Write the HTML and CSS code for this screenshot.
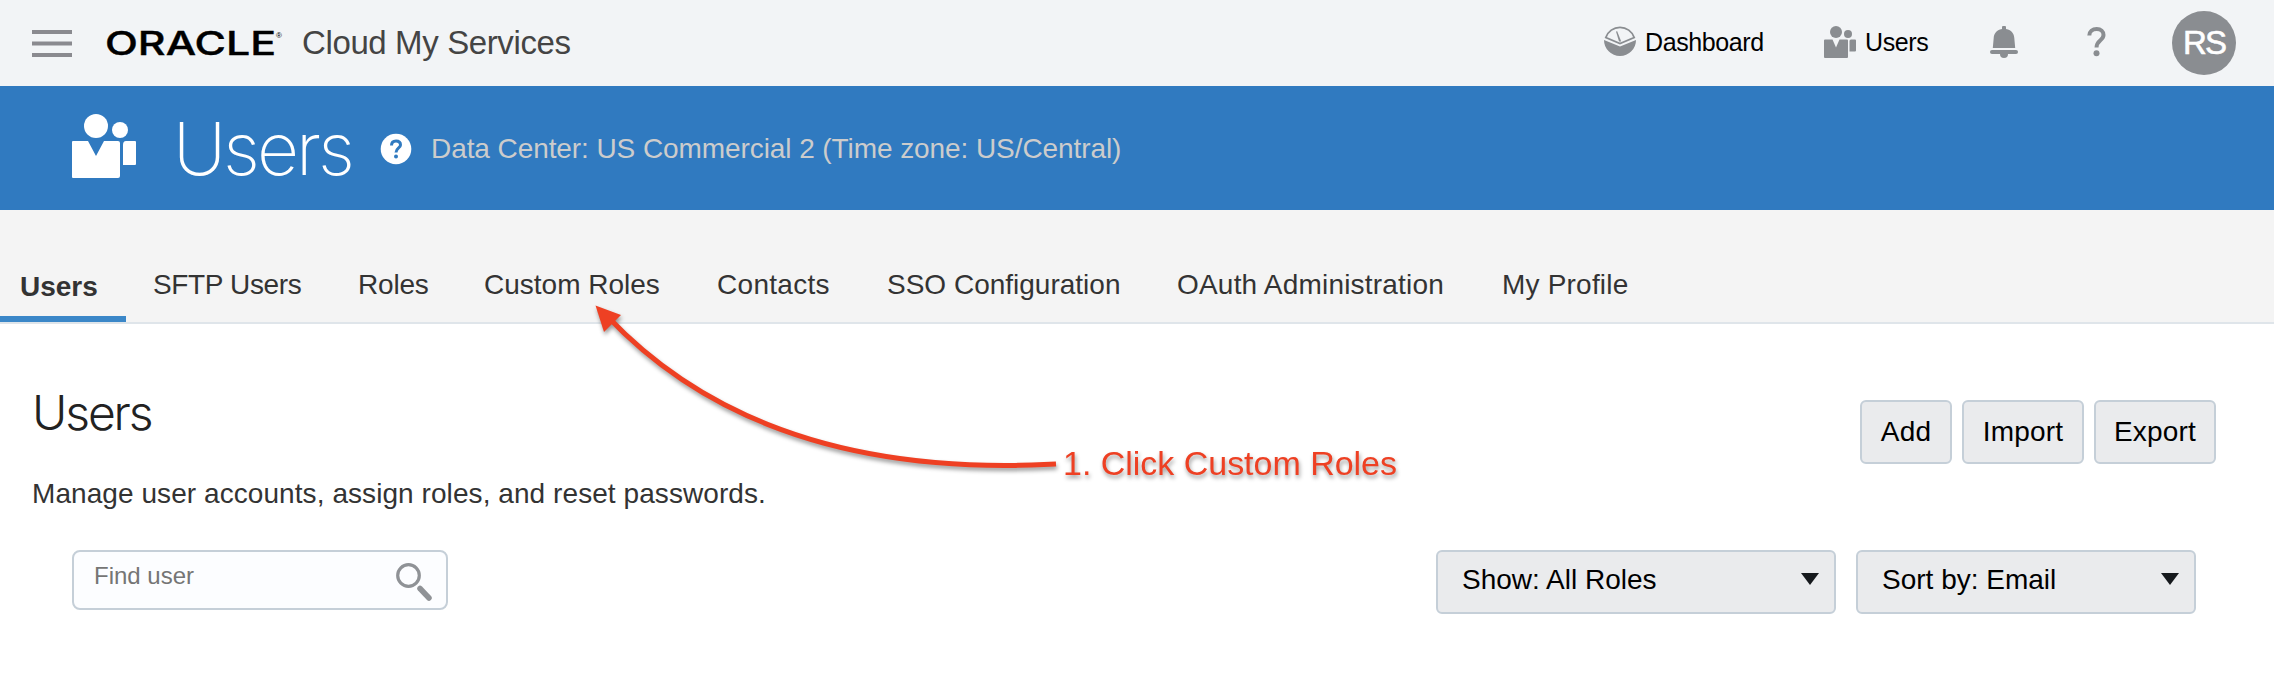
FILE: index.html
```html
<!DOCTYPE html>
<html lang="en">
<head>
<meta charset="utf-8">
<title>Users</title>
<link rel="stylesheet" href="styles.css">
</head>
<body>
<header class="topbar">
  <svg class="menu-icon" width="40" height="28" viewBox="0 0 40 28"><path d="M0 2h40M0 13.500h40M0 25h40" stroke="#8a8a8f" stroke-width="4"/></svg>
  <svg class="logo" width="180" height="40" viewBox="0 0 180 40"><text x="-1" y="32" textLength="171" lengthAdjust="spacingAndGlyphs" class="logo-text">ORACLE</text><text x="170" y="15" class="logo-mark">®</text></svg>
  <span class="product">Cloud My Services</span>
  <nav class="top-links">
    <a class="top-link dash"><svg width="32" height="32" viewBox="0 0 32 32" fill="#8a8d91"><path d="M1.800 11.500A15 15 0 0 1 30.200 11.500L16 17.500Z" fill="none" stroke="#8a8d91" stroke-width="1.800"/><path d="M12 5.500l1.200-.3L17.200 15.500h-2.200z"/><path d="M0 14L16 20.500 32 14A16 16 0 1 1 0 14z"/></svg><span>Dashboard</span></a>
    <a class="top-link people"><svg width="32" height="32" viewBox="0 0 32 32" fill="#8a8d91"><circle cx="12" cy="6" r="6"/><circle cx="24" cy="8" r="4"/><path d="M1 13.500H8.500L12 21.500 15.500 13.500H23Q24 13.500 24 14.500V31Q24 32 23 32H1Q0 32 0 31V14.500Q0 13.500 1 13.500zM27 13.500H31Q32 13.500 32 14.500V24.500Q32 25.500 31 25.500H25.500V15Q25.500 13.500 27 13.500z"/></svg><span>Users</span></a>
    <svg class="bell" width="28" height="32" viewBox="0 0 28 32" fill="#8a8d91"><path d="M12 3V1.500a2 2 0 0 1 4 0V3C22 4 24 8 24.300 12L25.200 22H2.800L3.700 12C4 8 6 4 12 3z"/><rect y="24" width="28" height="4" rx="2"/><path d="M10 28h8a4 4 0 0 1-8 0z"/></svg>
    <svg class="help" width="20" height="32" viewBox="0 0 20 32"><path d="M2.300 8.500C2.300 4.500 5.500 2 9.700 2S16.500 4.500 16.500 8C16.500 13.500 9.500 13 9.500 20.500" fill="none" stroke="#8a8d91" stroke-width="4"/><circle cx="9.500" cy="26.300" r="3" fill="#8a8d91"/></svg>
    <span class="avatar">RS</span>
  </nav>
</header>
<section class="banner">
  <svg class="banner-icon" width="64" height="64" viewBox="0 0 32 32" fill="#fff"><circle cx="12" cy="6" r="6"/><circle cx="24" cy="8" r="4"/><path d="M.5 13.500H8L12 21 16 13.500H23Q24 13.500 24 14.500V31Q24 32 23 32H.5Q0 32 0 31.500V14Q0 13.500 .5 13.500zM27 13.500H31.500Q32 13.500 32 14V25Q32 25.500 31.500 25.500H25.500V15.500Q25.500 13.500 27 13.500z"/></svg>
  <h1 class="banner-title">Users</h1>
  <svg class="banner-help" width="32" height="32" viewBox="0 0 32 32"><circle cx="16" cy="16" r="15.300" fill="#fff"/><path d="M11.500 12.500C11.500 9.500 13.300 8 16 8S20.500 9.600 20.500 12C20.500 15 16 15 16 19.500" fill="none" stroke="#307ac0" stroke-width="3"/><circle cx="16" cy="23.500" r="2" fill="#307ac0"/></svg>
  <span class="datacenter">Data Center: US Commercial 2 (Time zone: US/Central)</span>
</section>
<nav class="tabs">
  <a class="tab active">Users</a>
  <a class="tab sftp">SFTP Users</a>
  <a class="tab roles">Roles</a>
  <a class="tab custom">Custom Roles</a>
  <a class="tab contacts">Contacts</a>
  <a class="tab sso">SSO Configuration</a>
  <a class="tab oauth">OAuth Administration</a>
  <a class="tab profile">My Profile</a>
</nav>
<main class="content">
  <div class="heading-row">
    <div class="intro">
      <h2 class="title">Users</h2>
      <p class="desc">Manage user accounts, assign roles, and reset passwords.</p>
    </div>
    <div class="buttons"><button class="btn b-add">Add</button><button class="btn">Import</button><button class="btn">Export</button></div>
  </div>
  <div class="filters">
    <div class="search"><span>Find user</span><svg width="38" height="40" viewBox="0 0 38 40" fill="none" stroke="#8f9296"><circle cx="12.500" cy="13.500" r="10.800" stroke-width="3.200"/><path d="M24 26.500L33 36" stroke-width="5.500" stroke-linecap="round"/></svg></div>
    <div class="selects">
      <div class="select s-show"><span>Show: All Roles</span><i class="caret"></i></div>
      <div class="select s-sort"><span>Sort by: Email</span><i class="caret"></i></div>
    </div>
  </div>
</main>
<svg class="callout" width="840" height="200" viewBox="580 290 840 200">
  <path d="M607 316Q762 480 1056 464" fill="none" stroke="#ee4023" stroke-width="5"/>
  <path d="M595.500 305.500L621 315 604 332z" fill="#ee4023"/>
  <text x="1063" y="475" textLength="334" class="callout-text">1. Click Custom Roles</text>
</svg>
</body>
</html>
```
FILE: styles.css
```css
* { box-sizing: border-box; }
body { margin: 0; width: 2274px; height: 688px; overflow: hidden; background: #fff; color: #333; font-family: "Liberation Sans", Arial, sans-serif; position: relative; }
h1, h2, p { margin: 0; font-weight: 400; }
.topbar { height: 86px; background: #f2f4f6; display: flex; align-items: center; padding: 0 38px 0 32px; }
.menu-icon { flex: none; margin-top: 2px; }
.logo { margin-left: 34px; margin-top: -1px; flex: none; overflow: visible; }
.logo-text { font: 500 32px Inter, sans-serif; fill: #000; stroke: #000; stroke-width: 0.4px; }
.logo-mark { font: 8px "Liberation Sans", sans-serif; fill: #000; }
.product { margin-left: 16px; font-size: 33px; color: #444; letter-spacing: -0.380px; white-space: nowrap; }
.top-links { margin-left: auto; display: flex; align-items: center; color: #000; font-size: 25px; letter-spacing: -0.400px; }
.top-link { display: flex; align-items: center; gap: 9px; }
.top-link span { margin-top: -2px; }
.top-link svg { margin-top: -2px; }
.dash { width: 220px; }
.people { width: 166px; }
.bell { margin-top: -2px; }
.help { margin-left: 69px; margin-top: -1px; }
.avatar { margin-left: 65px; width: 64px; height: 64px; border-radius: 50%; background: #8a8d91; color: #fff; font-size: 33px; letter-spacing: -2px; -webkit-text-stroke: 0.6px #fff; display: flex; align-items: center; justify-content: center; }
.banner { height: 124px; background: #307ac0; display: flex; align-items: center; padding-left: 72px; color: #fff; }
.banner-icon { margin-top: -4px; }
.banner-title { font: 200 73px Inter, sans-serif; letter-spacing: -3px; margin-left: 37px; width: 183px; white-space: nowrap; }
.banner-help { margin-left: 24px; margin-top: 1px; }
.datacenter { margin-left: 19px; margin-top: 1px; font-size: 28px; letter-spacing: -0.080px; color: #ccc; }
.tabs { height: 114px; background: #f4f4f4; border-bottom: 2px solid #dfe5ea; display: flex; font-size: 28px; align-items: flex-end; white-space: nowrap; }
.tab { height: 58px; line-height: 41px; flex: none; }
.active { width: 126px; margin-right: 27px; padding-left: 20px; border-bottom: 6px solid #3b87c8; font-weight: 700; line-height: 45px; }
.sftp { width: 205px; letter-spacing: -0.350px; }
.roles { width: 126px; letter-spacing: -0.200px; }
.custom { width: 233px; }
.contacts { width: 170px; letter-spacing: 0.300px; }
.sso { width: 290px; }
.oauth { width: 325px; letter-spacing: 0.200px; }
.profile { letter-spacing: 0.200px; }
.content { padding: 62px 58px 0 32px; }
.heading-row { display: flex; justify-content: space-between; }
.title { font: 300 48px Inter, sans-serif; line-height: 54px; letter-spacing: -2.100px; color: #222; }
.desc { font-size: 28px; margin-top: 38px; line-height: 32px; letter-spacing: 0.070px; }
.buttons { display: flex; gap: 10px; padding-top: 14px; }
.btn { height: 64px; width: 122px; border: 2px solid #c5cfd8; border-radius: 6px; background: #eaebed; color: #000; font: 28px "Liberation Sans", sans-serif; letter-spacing: 0.200px; padding: 0 0 1px; }
.b-add { width: 92px; }
.filters { display: flex; justify-content: space-between; padding: 40px 20px 0 40px; }
.search { width: 376px; height: 60px; border: 2px solid #c5cfd8; border-radius: 8px; background: #fcfdff; color: #757575; font-size: 24px; padding: 10px 12px 0 20px; display: flex; justify-content: space-between; line-height: 28px; }
.selects { display: flex; gap: 20px; }
.select { height: 64px; border: 2px solid #c5cfd8; border-radius: 6px; background: #eaebed; color: #000; font-size: 28px; padding: 0 15px 0 24px; display: flex; justify-content: space-between; line-height: 56px; }
.s-show { width: 400px; }
.s-sort { width: 340px; }
.caret { width: 0; height: 0; border: solid transparent; border-width: 12px 9px 0; border-top-color: #16191d; margin-top: 21px; }
.callout { position: absolute; left: 580px; top: 290px; filter: drop-shadow(1px 3px 2px rgba(0,0,0,.4)); }
.callout-text { font: 34px "Liberation Sans", sans-serif; fill: #ee4023; }
```
